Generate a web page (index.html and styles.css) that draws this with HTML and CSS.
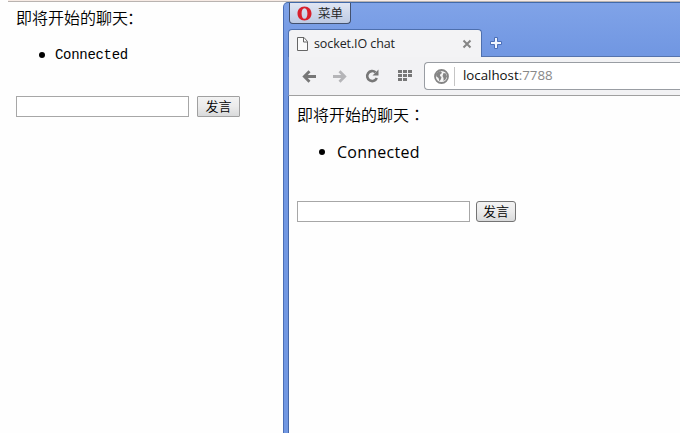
FILE: index.html
```html
<!DOCTYPE html>
<html lang="zh-CN">
<head>
<meta charset="utf-8">
<title>socket.IO chat</title>
<link rel="stylesheet" href="styles.css">
</head>
<body>
<div class="desktop">
  <main class="page page-left">
    <div class="heading">即将开始的聊天<span class="colon">：</span></div>
    <ul class="messages"><li><span>Connected</span></li></ul>
    <form class="compose"><input class="field" type="text" aria-label="message"><button class="send" type="button">发言</button></form>
  </main>
  <section class="window">
    <div class="titlebar">
      <div class="menu">
        <svg width="15" height="15" viewBox="0 0 15 15"><path fill="#d8202c" fill-rule="evenodd" d="M7.5.5C3.3.5.5 3.400.5 7.500s2.800 7 7 7 7-2.900 7-7-2.800-7-7-7Zm0 1.700c2 0 2.900 2.400 2.900 5.300s-.9 5.300-2.900 5.300S4.600 10.400 4.600 7.500s.9-5.300 2.900-5.300Z"/></svg>
        <span class="menu-label">菜单</span>
      </div>
    </div>
    <div class="tabs">
      <div class="tab">
        <svg width="12" height="15" viewBox="0 0 12 15"><path fill="#fafafa" stroke="#666" d="M.5.5h6.500l3.500 4v9H.5Z"/><path fill="none" stroke="#666" d="M6.500.5v4.500h4"/></svg>
        <span class="tab-title">socket.IO chat</span>
        <svg class="close" width="10" height="10" viewBox="0 0 10 10"><path fill="none" stroke="#858585" stroke-width="2" d="m1.500 1.500 7 7m0-7-7 7"/></svg>
      </div>
      <svg class="plus" width="14" height="14" viewBox="0 0 14 14"><path fill="#f0f5ff" stroke="#4b6fb9" d="M5.500 1.500h3v4h4v3h-4v4h-3v-4h-4v-3h4Z"/></svg>
    </div>
    <div class="toolbar">
      <svg class="nav" width="15" height="13" viewBox="0 0 15 13"><path fill="none" stroke="#777" stroke-width="2.800" d="M7.500 1.200 2.300 6.500l5.200 5.300M2.500 6.500H14"/></svg>
      <svg class="nav" width="15" height="13" viewBox="0 0 15 13"><path fill="none" stroke="#b5b5b8" stroke-width="2.800" d="m7.500 1.200 5.200 5.300-5.200 5.300M12.500 6.500H1"/></svg>
      <svg class="nav reload" width="14" height="14" viewBox="0 0 14 14"><path fill="none" stroke="#777" stroke-width="2.600" d="M10.500 3.300A5 5 0 1 0 11.800 9"/><path fill="#777" d="M13.500.5v6h-6Z"/></svg>
      <svg class="nav grid" width="15" height="12" viewBox="0 0 15 12"><path fill="#777" d="M0 0h4v3H0zM5 0h4v3H5zM10 0h4v3h-4zM0 4h4v3H0zM5 4h4v3H5zM10 4h4v3h-4zM0 8h4v3H0zM5 8h4v3H5z"/></svg>
      <div class="address">
        <svg width="15" height="15" viewBox="0 0 15 15"><circle cx="7.500" cy="7.500" r="6.500" fill="#f6f6f6" stroke="#858585" stroke-width="1.800"/><path fill="#858585" d="M2 5 4.500 2.500 7 2.300 8 4 6.300 5.200 6 7 7.500 8 7 10l-1.500 2.500L4.500 9 2.300 7.500ZM9.500 4 12 4.500l1 3-1.500 3-2 1.500V9L8.500 7Z"/></svg>
        <span class="divider"></span>
        <span class="url">localhost<span class="port">:7788</span></span>
      </div>
    </div>
    <main class="page page-right">
      <div class="heading">即将开始的聊天<span class="colon" lang="zh-TW">：</span></div>
      <ul class="messages"><li><span>Connected</span></li></ul>
      <form class="compose"><input class="field" type="text" aria-label="message"><button class="send" type="button">发言</button></form>
    </main>
  </section>
</div>
</body>
</html>
```
FILE: styles.css
```css
* { box-sizing: border-box; }
html, body { margin: 0; height: 100%; overflow: hidden; background: #fefefe; }
.desktop {
  display: flex;
  height: 433px;
  background: linear-gradient(#f7ebe5 0 1px, #b9b3b0 1px 2px, transparent 2px) 8px 0 no-repeat;
}
svg { display: block; flex: none; }
.page { color: #000; }
.page-left {
  width: 283px;
  padding: 10px 0 0 16px;
  font-family: "Liberation Mono", "Noto Sans CJK SC", monospace;
}
.heading { height: 20px; font-size: 16px; line-height: 20px; font-weight: 350; white-space: nowrap; }
.messages { margin: 0; padding: 0 0 0 40px; font-size: 16px; line-height: 20px; list-style: none; }
.messages li { display: flex; align-items: center; }
.messages li::before {
  content: "";
  width: 6px;
  height: 6px;
  margin: 0 12px 0 -18px;
  border-radius: 50%;
  background: #000;
}
.page-left .messages { margin-top: 14px; padding-left: 39px; font-size: 14px; letter-spacing: -0.3px; }
.page-left .messages li::before { margin: 0 10px 0 -16px; }
.page-left .messages span { padding-top: 1px; }
.page-left .colon { margin-left: -1px; }
.page-right .colon { font-family: "Noto Sans CJK TC", sans-serif; }
.compose { display: flex; margin: 0; }
.page-left .compose { margin-top: 31px; gap: 8px; }
.field { width: 173px; height: 21px; padding: 1px; border: 1px solid #a7a7a7; background: #fff; }
.send {
  height: 21px;
  padding: 0 0 1px;
  font: 350 13px/16px "Noto Sans CJK SC", sans-serif;
  color: #000;
  background: linear-gradient(#f3f3f3, #ebebeb 50%, #d9dadb);
}
.page-left .send { width: 43px; border: 1px solid #a0a0a0; border-radius: 1px; }
.window {
  display: flex;
  flex-direction: column;
  flex: 1;
  min-width: 0;
  margin-top: 2px;
  padding-left: 4px;
  border-top: 1px solid #4169a9;
  border-left: 1px solid #4a6eb7;
  border-top-left-radius: 5px;
  background: linear-gradient(#80a3e8, #7197e2 50px);
}
.titlebar { height: 26px; padding-left: 1px; }
.menu {
  display: flex;
  align-items: center;
  width: 62px;
  height: 21px;
  padding-left: 7px;
  gap: 6px;
  border: 1px solid #43516e;
  border-top: 0;
  border-radius: 0 0 4px 4px;
  background: linear-gradient(#e0e6f3, #bdcae3);
  font: 350 12.500px/18px "Noto Sans CJK SC", sans-serif;
  color: #222;
}
.tabs { display: flex; height: 28px; border-bottom: 1px solid #5573ad; }
.tab {
  display: flex;
  align-items: center;
  width: 194px;
  height: 29px;
  padding: 0 9px 0 8px;
  border: 1px solid #4d6fae;
  border-bottom: 0;
  border-radius: 4px 4px 0 0;
  background: #f3f3f5;
}
.tab-title { margin-left: 5px; font: 12.500px/18px "Open Sans", sans-serif; color: #222; letter-spacing: -0.1px; white-space: nowrap; }
.close { margin-left: auto; }
.plus { margin: 7px 0 0 7px; }
.toolbar {
  display: flex;
  align-items: center;
  height: 39px;
  padding-left: 13px;
  border-left: 1px solid #6485c5;
  border-bottom: 1px solid #a0a0a0;
  background: #f2f2f4;
}
.nav { margin-right: 15px; }
.nav.reload { margin: 0 19px 0 3px; }
.nav.grid { margin-right: 11px; }
.address {
  display: flex;
  align-items: center;
  flex: 1;
  height: 28px;
  padding-left: 9px;
  border: 1px solid #999da3;
  border-right: 0;
  border-radius: 4px 0 0 4px;
  background: #fff;
}
.divider { width: 1px; height: 19px; margin: 0 8px 0 5px; background: #c5c5c5; }
.url { margin-top: -2px; font: 13.300px/20px "Open Sans", sans-serif; color: #111; }
.port { color: #888; }
.page-right {
  flex: 1;
  padding: 8px 0 0 8px;
  border-left: 1px solid #4668a8;
  background: #fefefe;
  font-family: "Open Sans", "Noto Sans CJK SC", sans-serif;
}
.page-right .messages { margin-top: 18px; letter-spacing: 0.25px; }
.page-right .compose { margin-top: 39px; gap: 6px; }
.page-right .send { width: 40px; border: 1px solid #747474; border-radius: 3px; }
```
